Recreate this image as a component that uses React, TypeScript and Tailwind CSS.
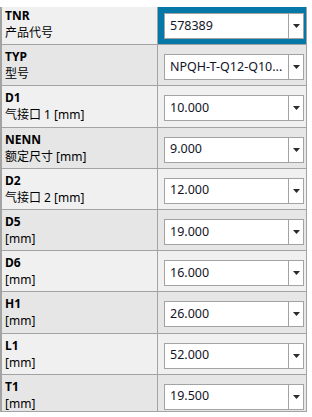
import React from 'react';

type Param = {
  code: string;
  label: string;
  value: string;
};

const params: Param[] = [
  { code: 'TNR', label: '产品代号', value: '578389' },
  { code: 'TYP', label: '型号', value: 'NPQH-T-Q12-Q10...' },
  { code: 'D1', label: '气接口 1 [mm]', value: '10.000' },
  { code: 'NENN', label: '额定尺寸 [mm]', value: '9.000' },
  { code: 'D2', label: '气接口 2 [mm]', value: '12.000' },
  { code: 'D5', label: '[mm]', value: '19.000' },
  { code: 'D6', label: '[mm]', value: '16.000' },
  { code: 'H1', label: '[mm]', value: '26.000' },
  { code: 'L1', label: '[mm]', value: '52.000' },
  { code: 'T1', label: '[mm]', value: '19.500' },
];

function ComboBox({ value }: { value: string }) {
  return (
    <div className="flex w-[140px] h-[26px] bg-white border border-[#a3a3a3]">
      <div className="flex-1 min-w-0 pl-[5px] flex items-center text-[12.5px] text-[#141428] whitespace-nowrap overflow-hidden">
        {value}
      </div>
      <div className="w-[15px] border-l border-[#a3a3a3] flex items-center justify-center">
        <svg width="7" height="4" viewBox="0 0 7 4">
          <path d="M0 0 L7 0 L3.5 4 Z" fill="#2b2b2b" />
        </svg>
      </div>
    </div>
  );
}

function ParamRow({ param, index }: { param: Param; index: number }) {
  const selected = index === 0;
  const rowBg = index % 2 === 0 ? 'bg-[#f0f0f0]' : 'bg-[#e6e6e6]';

  return (
    <div className={`flex h-[41.2px] border-b border-[#a3a3a3] ${rowBg}`}>
      {/* Label */}
      <div className="w-[156px] shrink-0 border-r border-[#a3a3a3] pl-[3px] pt-[3px] leading-[17px] text-[12px] text-black">
        <div className="font-bold">{param.code}</div>
        <div>{param.label}</div>
      </div>

      {/* Value */}
      <div className={`flex-1 pl-[6px] pt-[9px] ${selected ? 'bg-[#0678a8]' : ''}`}>
        <ComboBox value={param.value} />
      </div>
    </div>
  );
}

export default function App() {
  return (
    <div className="w-[312px] h-[417px] bg-white overflow-hidden font-['Noto_Sans','Noto_Sans_CJK_SC',sans-serif]">
      <div className="mt-[7px] w-[307px] h-[405px] overflow-hidden border-l-2 border-r border-b border-[#a3a3a3]">
        <div className="-mt-[3px]">
          {params.map((p, i) => (
            <ParamRow key={p.code} param={p} index={i} />
          ))}
        </div>
      </div>
    </div>
  );
}
